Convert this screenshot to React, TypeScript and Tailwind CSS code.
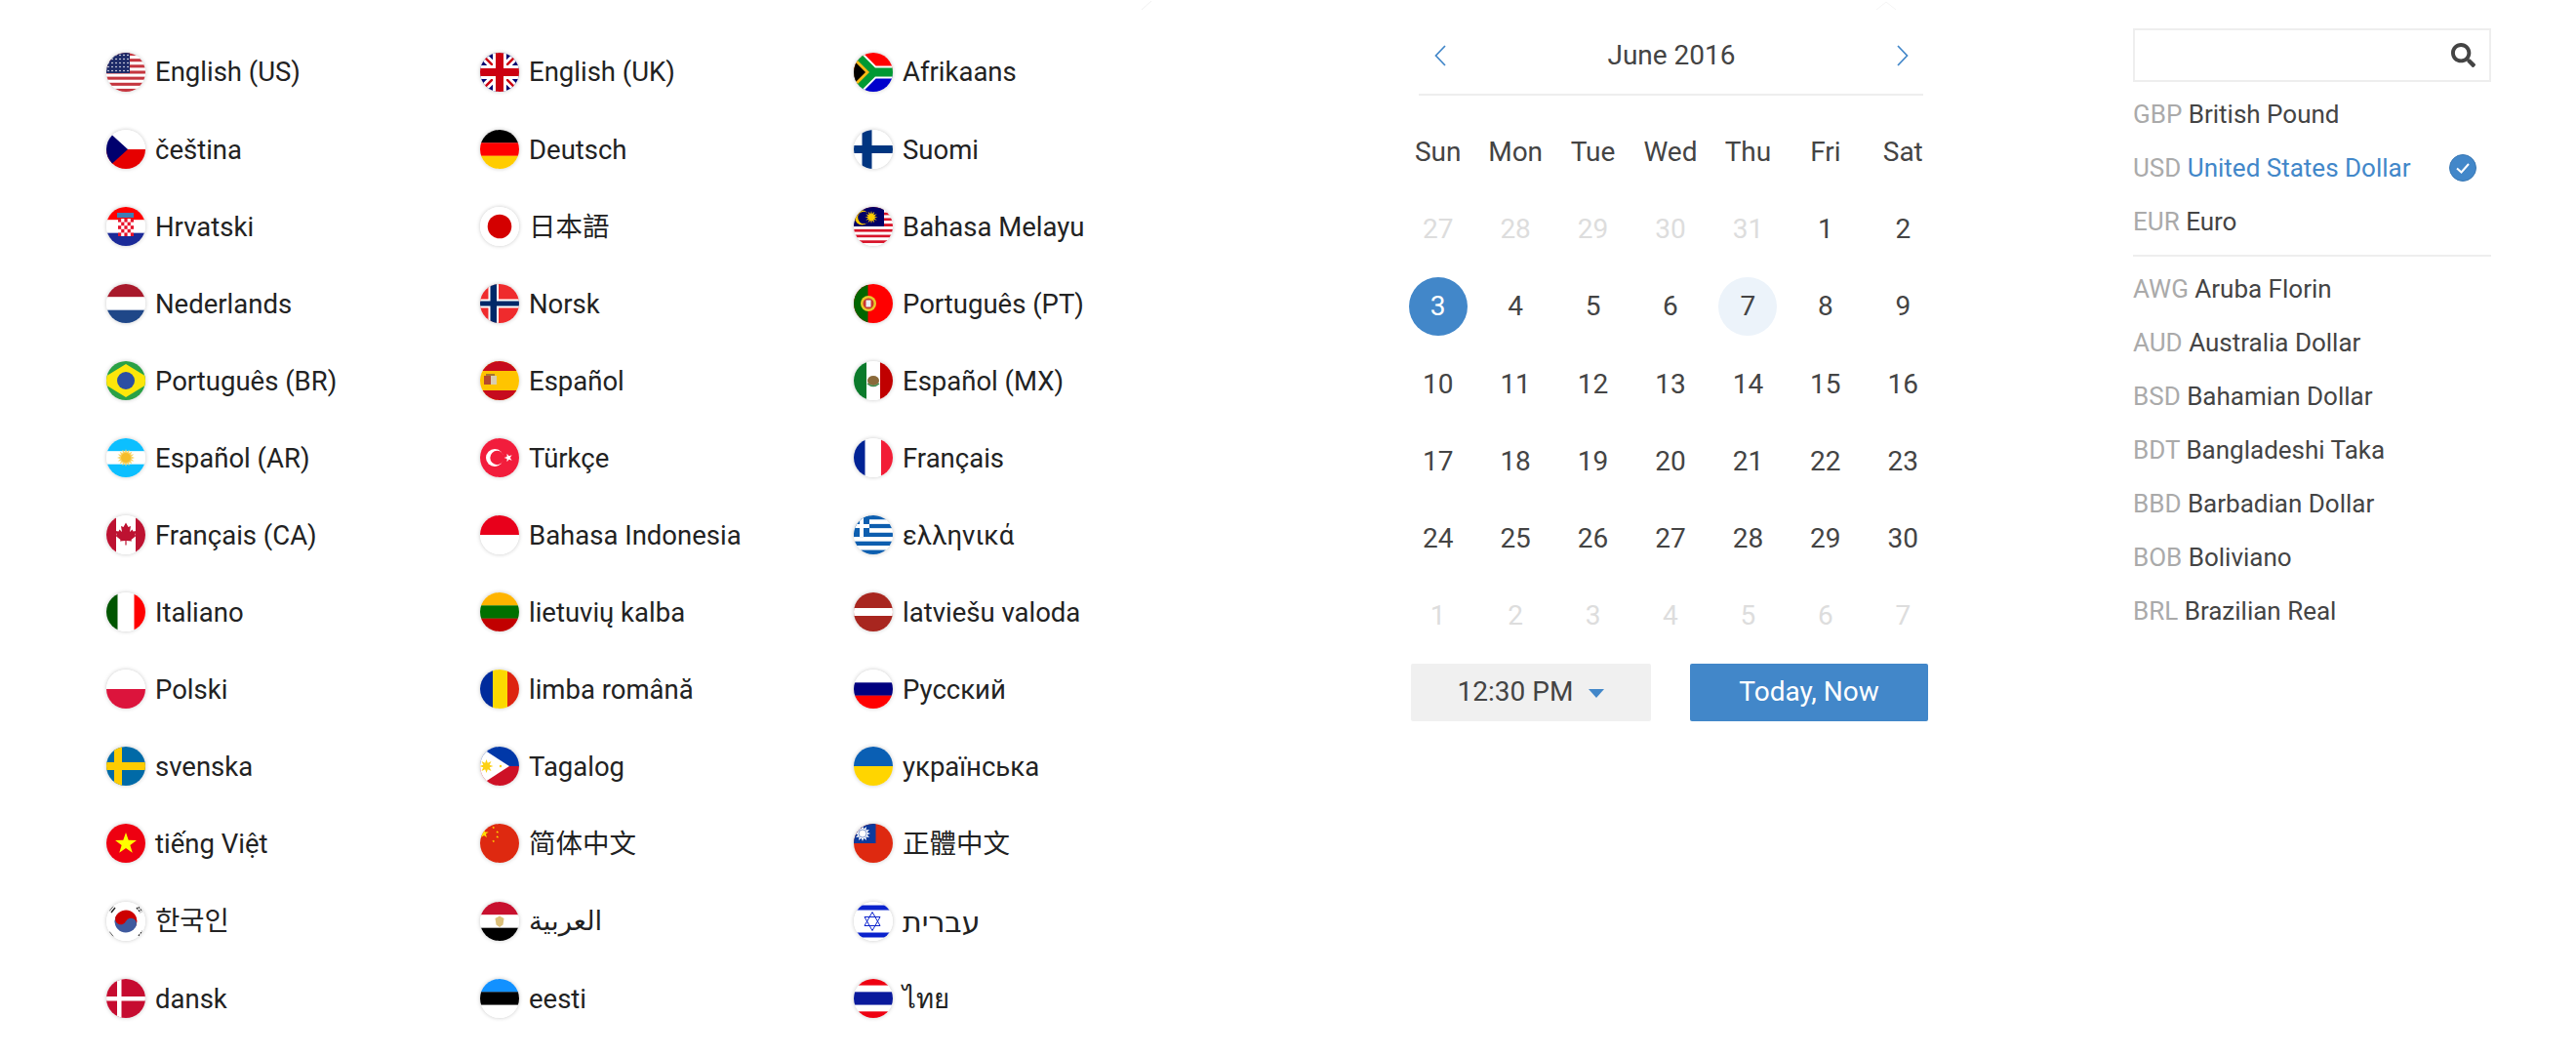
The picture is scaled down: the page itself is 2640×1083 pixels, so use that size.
import type { ReactNode } from 'react';
import { FaSearch } from 'react-icons/fa';

const starPoints = (cx: number, cy: number, r: number, n = 5, inner = 0.4, rot = -90) => {
  const pts: string[] = [];
  for (let i = 0; i < n * 2; i++) {
    const rad = i % 2 === 0 ? r : r * inner;
    const a = ((rot + (i * 180) / n) * Math.PI) / 180;
    pts.push(`${(cx + rad * Math.cos(a)).toFixed(2)},${(cy + rad * Math.sin(a)).toFixed(2)}`);
  }
  return pts.join(' ');
};

// equal horizontal bands
const hb = (colors: string[]) =>
  colors.map((c, i) => (
    <rect key={i} x="0" y={(i * 40) / colors.length} width="40" height={40 / colors.length + 0.2} fill={c} />
  ));

const R = ({ x, y, w, h, f }: { x: number; y: number; w: number; h: number; f: string }) => (
  <rect x={x} y={y} width={w} height={h} fill={f} />
);

const cross = (bg: string, fg: string, vx: number, vw: number, hy: number, hh: number, inner?: string, pad = 0) => (
  <>
    <R x={0} y={0} w={40} h={40} f={bg} />
    <R x={vx} y={0} w={vw} h={40} f={fg} />
    <R x={0} y={hy} w={40} h={hh} f={fg} />
    {inner && <R x={vx + pad} y={0} w={vw - pad * 2} h={40} f={inner} />}
    {inner && <R x={0} y={hy + pad} w={40} h={hh - pad * 2} f={inner} />}
  </>
);

const usStripes = Array.from({ length: 13 }, (_, i) => i);
const usDots = Array.from({ length: 30 }, (_, i) => i);
const myStripes = Array.from({ length: 14 }, (_, i) => i);
const grStripes = Array.from({ length: 9 }, (_, i) => i);
const hrCells = Array.from({ length: 25 }, (_, i) => i);

const flags: Record<string, ReactNode> = {
  us: (
    <>
      <R x={0} y={0} w={40} h={40} f="#fff" />
      {usStripes.map((i) => i % 2 === 0 && <R key={i} x={0} y={(i * 40) / 13} w={40} h={40 / 13} f="#c5363f" />)}
      <R x={0} y={0} w={24} h={21} f="#1d2a68" />
      {usDots.map((i) => (
        <circle key={i} cx={2 + (i % 6) * 4} cy={2.5 + Math.floor(i / 6) * 4} r="0.8" fill="#fff" />
      ))}
    </>
  ),
  cz: (
    <>
      {hb(['#fff', '#e60000'])}
      <polygon points="0,0 22,20 0,40" fill="#00006e" />
    </>
  ),
  hr: (
    <>
      {hb(['#f00', '#fff', '#1b2a98'])}
      <R x={11} y={6} w={17} h={5} f="#3d7fb5" />
      <R x={12} y={12} w={16} h={18} f="#fff" />
      {hrCells.map(
        (i) =>
          i % 2 === 0 && (
            <R key={i} x={12 + (i % 5) * 3.2} y={12 + Math.floor(i / 5) * 3.6} w={3.2} h={3.6} f="#e8122a" />
          )
      )}
    </>
  ),
  nl: hb(['#a8192b', '#fff', '#1f4788']),
  br: (
    <>
      <R x={0} y={0} w={40} h={40} f="#2aa146" />
      <polygon points="-8,20 20,3 48,20 20,37" fill="#fde60a" />
      <circle cx="20" cy="20" r="9" fill="#2c4fa3" />
    </>
  ),
  ar: (
    <>
      {hb(['#0cbfff', '#fff', '#0cbfff'])}
      <polygon points={starPoints(20, 20, 9, 16, 0.65)} fill="#f9d368" />
      <circle cx="20" cy="20" r="5" fill="#f5bd2b" />
    </>
  ),
  ca: (
    <>
      <R x={0} y={0} w={40} h={40} f="#fff" />
      <R x={0} y={0} w={10} h={40} f="#bd1231" />
      <R x={30} y={0} w={10} h={40} f="#bd1231" />
      <polygon
        points="20,7.5 17.5,12 15,11 16,17 13.5,14.5 12.5,16.5 9.5,16 10.5,20 9.5,21 14.5,25 14,26.5 19.4,26 19.4,30.5 20.6,30.5 20.6,26 26,26.5 25.5,25 30.5,21 29.5,20 30.5,16 27.5,16.5 26.5,14.5 24,17 25,11 22.5,12"
        fill="#bd1231"
      />
    </>
  ),
  it: (
    <>
      <R x={0} y={0} w={40} h={40} f="#fff" />
      <R x={0} y={0} w={11.5} h={40} f="#005500" />
      <R x={28.5} y={0} w={11.5} h={40} f="#f00" />
    </>
  ),
  pl: hb(['#fff', '#dc143c']),
  se: cross('#006aa7', '#fecc00', 8, 8, 16, 8),
  vn: (
    <>
      <R x={0} y={0} w={40} h={40} f="#ee0011" />
      <polygon points={starPoints(20, 20.5, 11.5)} fill="#ff0" />
    </>
  ),
  kr: (
    <>
      <R x={0} y={0} w={40} h={40} f="#fff" />
      <g transform="rotate(25 20 20)">
        <path d="M8.5 20a11.5 11.5 0 0 1 23 0z" fill="#cc0000" />
        <path d="M8.5 20a11.5 11.5 0 0 0 23 0z" fill="#3f5a9e" />
        <circle cx="14.25" cy="20" r="5.75" fill="#cc0000" />
        <circle cx="25.75" cy="20" r="5.75" fill="#3f5a9e" />
      </g>
      <g stroke="#222" strokeWidth="1.4">
        <path d="M3 9l4-5M5 11l4-5" />
        <path d="M31 6l4 5M33 5l4 5" strokeDasharray="2 1" />
        <path d="M3 31l4 5" />
        <path d="M33 35l4-5" strokeDasharray="2 1" />
      </g>
    </>
  ),
  dk: cross('#c60c30', '#fff', 11, 4.5, 18, 4.5),
  gb: (
    <>
      <R x={0} y={0} w={40} h={40} f="#00016e" />
      <path d="M0 0L40 40M40 0L0 40" stroke="#fff" strokeWidth="8" />
      <path d="M0 0L40 40M40 0L0 40" stroke="#cc0011" strokeWidth="2.5" />
      <R x={13} y={0} w={14} h={40} f="#fff" />
      <R x={0} y={13} w={40} h={14} f="#fff" />
      <R x={16} y={0} w={8} h={40} f="#cc0011" />
      <R x={0} y={16} w={40} h={8} f="#cc0011" />
    </>
  ),
  de: hb(['#000', '#f00', '#fc0']),
  jp: (
    <>
      <R x={0} y={0} w={40} h={40} f="#fff" />
      <circle cx="20" cy="20" r="12.3" fill="#d40000" />
    </>
  ),
  no: cross('#ef2b2d', '#fff', 8.5, 10.5, 15.5, 9, '#002868', 2),
  es: (
    <>
      <R x={0} y={0} w={40} h={40} f="#ffc400" />
      <R x={0} y={0} w={40} h={10} f="#c60b1e" />
      <R x={0} y={30} w={40} h={10} f="#c60b1e" />
      <R x={4} y={15} w={7} h={9} f="#b5482e" />
      <R x={11} y={15} w={6} h={9} f="#d9cdb0" />
      <R x={6} y={13} w={9} h={2} f="#a8752c" />
    </>
  ),
  tr: (
    <>
      <R x={0} y={0} w={40} h={40} f="#f21d3c" />
      <circle cx="15" cy="20" r="9" fill="#fff" />
      <circle cx="17.5" cy="20" r="7.2" fill="#f21d3c" />
      <polygon points={starPoints(29, 20, 4.5, 5, 0.4, 180)} fill="#fff" />
    </>
  ),
  id: hb(['#e8001b', '#fff']),
  lt: hb(['#ffb400', '#007000', '#c10000']),
  ro: (
    <>
      <R x={0} y={0} w={13} h={40} f="#002b9c" />
      <R x={13} y={0} w={15} h={40} f="#fcd900" />
      <R x={28} y={0} w={12} h={40} f="#dd2410" />
    </>
  ),
  ph: (
    <>
      {hb(['#0038a8', '#ce1126'])}
      <polygon points="-4,-2 30,20 -4,42" fill="#fff" />
      <polygon points={starPoints(6.5, 20, 7, 8, 0.5)} fill="#fcd116" />
      <circle cx="21" cy="20" r="1.2" fill="#fcd116" />
    </>
  ),
  cn: (
    <>
      <R x={0} y={0} w={40} h={40} f="#de2910" />
      <polygon points={starPoints(4, 10, 5)} fill="#ffde00" />
      <polygon points={starPoints(13.7, 4, 1.5)} fill="#ffde00" />
      <polygon points={starPoints(17.7, 8.5, 1.5)} fill="#ffde00" />
      <polygon points={starPoints(17.7, 13.5, 1.5)} fill="#ffde00" />
      <polygon points={starPoints(13.7, 18, 1.5)} fill="#ffde00" />
    </>
  ),
  eg: (
    <>
      {hb(['#c8102e', '#fff', '#000'])}
      <polygon points="20,14.5 24.5,17 23.5,23.5 20,26 16.5,23.5 15.5,17" fill="#dcc07a" />
    </>
  ),
  ee: hb(['#1291ff', '#000', '#fff']),
  za: (
    <>
      <R x={0} y={0} w={40} h={20} f="#f00" />
      <R x={0} y={20} w={40} h={20} f="#0000cc" />
      <path d="M0 0L20 20H40M0 40L20 20" fill="none" stroke="#fff" strokeWidth="13" />
      <path d="M0 0L20 20H40M0 40L20 20" fill="none" stroke="#009933" strokeWidth="9" />
      <polygon points="0,4 16,20 0,36" fill="#ffb915" />
      <polygon points="0,8 12,20 0,32" fill="#000" />
    </>
  ),
  fi: cross('#fff', '#003580', 8.5, 10, 16, 8),
  my: (
    <>
      {myStripes.map((i) => (
        <R key={i} x={0} y={(i * 40) / 14} w={40} h={40 / 14 + 0.1} f={i % 2 === 0 ? '#d8142a' : '#fff'} />
      ))}
      <R x={0} y={0} w={31} h={20} f="#010066" />
      <circle cx="8.5" cy="11" r="7.5" fill="#fc0" />
      <circle cx="10.5" cy="11" r="6.3" fill="#010066" />
      <polygon points={starPoints(18, 10.5, 6.5, 12, 0.5)} fill="#fc0" />
    </>
  ),
  pt: (
    <>
      <R x={0} y={0} w={40} h={40} f="#f00" />
      <R x={0} y={0} w={14.5} h={40} f="#006600" />
      <circle cx="15" cy="20" r="8" fill="#e8c92a" />
      <circle cx="15" cy="20" r="5.5" fill="#c9342c" />
      <R x={12.5} y={16.5} w={5} h={7} f="#e8eef5" />
    </>
  ),
  mx: (
    <>
      <R x={0} y={0} w={40} h={40} f="#fff" />
      <R x={0} y={0} w={13} h={40} f="#0b7a2b" />
      <R x={27} y={0} w={13} h={40} f="#c00000" />
      <ellipse cx="20" cy="20" rx="6" ry="5" fill="#8a6a3a" />
      <path d="M14 23q6 5 12 0" fill="none" stroke="#3b8a4a" strokeWidth="1.6" />
    </>
  ),
  fr: (
    <>
      <R x={0} y={0} w={40} h={40} f="#fff" />
      <R x={0} y={0} w={11.5} h={40} f="#002395" />
      <R x={28} y={0} w={12} h={40} f="#f21d36" />
    </>
  ),
  gr: (
    <>
      {grStripes.map((i) => (
        <R key={i} x={0} y={(i * 40) / 9} w={40} h={40 / 9 + 0.1} f={i % 2 === 0 ? '#0d5eaf' : '#fff'} />
      ))}
      <R x={0} y={0} w={16} h={22} f="#0d5eaf" />
      <R x={6} y={0} w={4} h={22} f="#fff" />
      <R x={0} y={9} w={16} h={4} f="#fff" />
    </>
  ),
  lv: (
    <>
      <R x={0} y={0} w={40} h={40} f="#a8261f" />
      <R x={0} y={16} w={40} h={8} f="#fff" />
    </>
  ),
  ru: hb(['#fff', '#00007f', '#f00']),
  ua: hb(['#0a5fb4', '#ffd500']),
  tw: (
    <>
      <R x={0} y={0} w={40} h={40} f="#de2910" />
      <R x={0} y={0} w={22.5} h={20} f="#0d3a9c" />
      <polygon points={starPoints(9, 10, 8, 12, 0.6)} fill="#fff" />
      <circle cx="9" cy="10" r="4" fill="#fff" stroke="#0d3a9c" strokeWidth="0.5" />
    </>
  ),
  il: (
    <>
      <R x={0} y={0} w={40} h={40} f="#fff" />
      <R x={0} y={3.5} w={40} h={5} f="#0a22cc" />
      <R x={0} y={31.5} w={40} h={5} f="#0a22cc" />
      <g fill="none" stroke="#0a22cc" strokeWidth="1">
        <polygon points="19,10.5 27,24.5 11,24.5" />
        <polygon points="19,29.5 27,15.5 11,15.5" />
      </g>
    </>
  ),
  th: (
    <>
      {hb(['#ee0011', '#fff', '#0a1a9c', '#0a1a9c', '#fff', '#ee0011'])}
    </>
  ),
};

const languages: [string, string][] = [
  ['us', 'English (US)'], ['gb', 'English (UK)'], ['za', 'Afrikaans'],
  ['cz', 'čeština'], ['de', 'Deutsch'], ['fi', 'Suomi'],
  ['hr', 'Hrvatski'], ['jp', '日本語'], ['my', 'Bahasa Melayu'],
  ['nl', 'Nederlands'], ['no', 'Norsk'], ['pt', 'Português (PT)'],
  ['br', 'Português (BR)'], ['es', 'Español'], ['mx', 'Español (MX)'],
  ['ar', 'Español (AR)'], ['tr', 'Türkçe'], ['fr', 'Français'],
  ['ca', 'Français (CA)'], ['id', 'Bahasa Indonesia'], ['gr', 'ελληνικά'],
  ['it', 'Italiano'], ['lt', 'lietuvių kalba'], ['lv', 'latviešu valoda'],
  ['pl', 'Polski'], ['ro', 'limba română'], ['ru', 'Русский'],
  ['se', 'svenska'], ['ph', 'Tagalog'], ['ua', 'українська'],
  ['vn', 'tiếng Việt'], ['cn', '简体中文'], ['tw', '正體中文'],
  ['kr', '한국인'], ['eg', 'العربية'], ['il', 'עברית'],
  ['dk', 'dansk'], ['ee', 'eesti'], ['th', 'ไทย'],
];

const weekdays = ['Sun', 'Mon', 'Tue', 'Wed', 'Thu', 'Fri', 'Sat'];

const days: [number, boolean][] = [
  ...[27, 28, 29, 30, 31].map((d): [number, boolean] => [d, true]),
  ...Array.from({ length: 30 }, (_, i): [number, boolean] => [i + 1, false]),
  ...[1, 2, 3, 4, 5, 6, 7].map((d): [number, boolean] => [d, true]),
];

const topCurrencies = [
  ['GBP', 'British Pound'],
  ['USD', 'United States Dollar'],
  ['EUR', 'Euro'],
];

const otherCurrencies = [
  ['AWG', 'Aruba Florin'],
  ['AUD', 'Australia Dollar'],
  ['BSD', 'Bahamian Dollar'],
  ['BDT', 'Bangladeshi Taka'],
  ['BBD', 'Barbadian Dollar'],
  ['BOB', 'Boliviano'],
  ['BRL', 'Brazilian Real'],
];

function Flag({ code }: { code: string }) {
  return (
    <span className="h-10 w-10 shrink-0 overflow-hidden rounded-full shadow-[0_0_4px_rgba(0,0,0,0.22)]">
      <svg viewBox="0 0 40 40" className="block h-10 w-10">
        {flags[code]}
      </svg>
    </span>
  );
}

function Chevron({ dir }: { dir: 'left' | 'right' }) {
  return (
    <svg viewBox="0 0 12 22" className="h-[22px] w-3" fill="none" stroke="#4287c9" strokeWidth="1.7">
      <polyline points={dir === 'left' ? '11,1 1.5,11 11,21' : '1,1 10.5,11 1,21'} />
    </svg>
  );
}

function CurrencyRow({ code, name, active }: { code: string; name: string; active?: boolean }) {
  return (
    <div className="flex h-[55px] items-center justify-between pr-[15px] text-[26px]">
      <span className="whitespace-nowrap">
        <span className="text-[#aaaaaa]">{code}</span>{' '}
        <span className={active ? 'text-[#4287c9]' : 'text-[#444444]'}>{name}</span>
      </span>
      {active && (
        <svg viewBox="0 0 28 28" className="-mt-[2px] h-7 w-7">
          <circle cx="14" cy="14" r="13.5" fill="#4287c9" stroke="#3a78b4" />
          <polyline points="8,14.5 12.5,18.5 20,10" fill="none" stroke="#fff" strokeWidth="2" />
        </svg>
      )}
    </div>
  );
}

export default function App() {
  return (
    <div className="relative flex h-[1083px] w-[2640px] overflow-hidden bg-white pl-[109px] font-['Roboto','Noto_Sans_CJK_SC','DejaVu_Sans',sans-serif]">
      {/* Popover arrows left over at the top edge */}
      <svg viewBox="0 0 24 10" className="absolute left-[1168px] top-0 h-[10px] w-6" fill="none" stroke="#f0f0f0">
        <polyline points="2,10 12,1" />
      </svg>
      <svg viewBox="0 0 24 10" className="absolute left-[1921px] top-0 h-[10px] w-6" fill="none" stroke="#f4f4f4">
        <polyline points="2,10 12,2 22,10" />
      </svg>

      {/* Language list */}
      <div className="grid w-[1149px] shrink-0 grid-cols-3 auto-rows-[79.1px] pt-[34px] text-[27.5px] text-[#222222]">
        {languages.map(([code, label]) => (
          <div key={code} className="flex items-center gap-[10px]">
            <Flag code={code} />
            <span className={`whitespace-nowrap pt-px ${code === 'il' ? 'text-[30px]' : ''}`}>{label}</span>
          </div>
        ))}
      </div>

      {/* Calendar */}
      <div className="ml-[176px] w-[556px] shrink-0 pt-[17px] text-[28px] text-[#444444]">
        <div className="mb-[18px] ml-5 mr-[19px] flex h-[81px] items-center justify-between border-b-2 border-[#eeeeee] pl-[16px] pr-[15px]">
          <Chevron dir="left" />
          <span>June 2016</span>
          <Chevron dir="right" />
        </div>
        <div className="grid grid-cols-7 auto-rows-[79.3px] items-center justify-items-center">
          {weekdays.map((d) => (
            <span key={d}>{d}</span>
          ))}
          {days.map(([d, faded], i) => (
            <span
              key={i}
              className={`flex h-[60px] w-[60px] items-center justify-center rounded-full ${
                faded ? 'text-[#dddddd]' : ''
              } ${i === 7 ? 'bg-[#4287c9] text-white' : ''} ${i === 11 ? 'bg-[#ecf3fa]' : ''}`}
            >
              {d}
            </span>
          ))}
        </div>
        <div className="mt-[9px] flex gap-10 pl-3">
          <button className="flex h-[59px] w-[246px] items-center justify-center gap-4 rounded-[2px] bg-[#f0f0f0] pb-[2px]">
            12:30 PM
            <span className="mt-1 h-0 w-0 border-x-[8px] border-t-[9px] border-x-transparent border-t-[#4287c9]" />
          </button>
          <button className="h-[59px] w-[244px] rounded-[2px] bg-[#4287c9] pb-[2px] text-white">Today, Now</button>
        </div>
      </div>

      {/* Currency list */}
      <div className="ml-[196px] w-[367px] shrink-0 pt-[29px]">
        <div className="mb-[6px] flex h-[55px] items-center justify-end border-2 border-[#eeeeee] pr-[14px]">
          <FaSearch className="text-[25px] text-[#444444]" />
        </div>
        {topCurrencies.map(([code, name]) => (
          <CurrencyRow key={code} code={code} name={name} active={code === 'USD'} />
        ))}
        <div className="mb-[6px] mt-[6px] border-t-2 border-[#eeeeee]" />
        {otherCurrencies.map(([code, name]) => (
          <CurrencyRow key={code} code={code} name={name} />
        ))}
      </div>
    </div>
  );
}
